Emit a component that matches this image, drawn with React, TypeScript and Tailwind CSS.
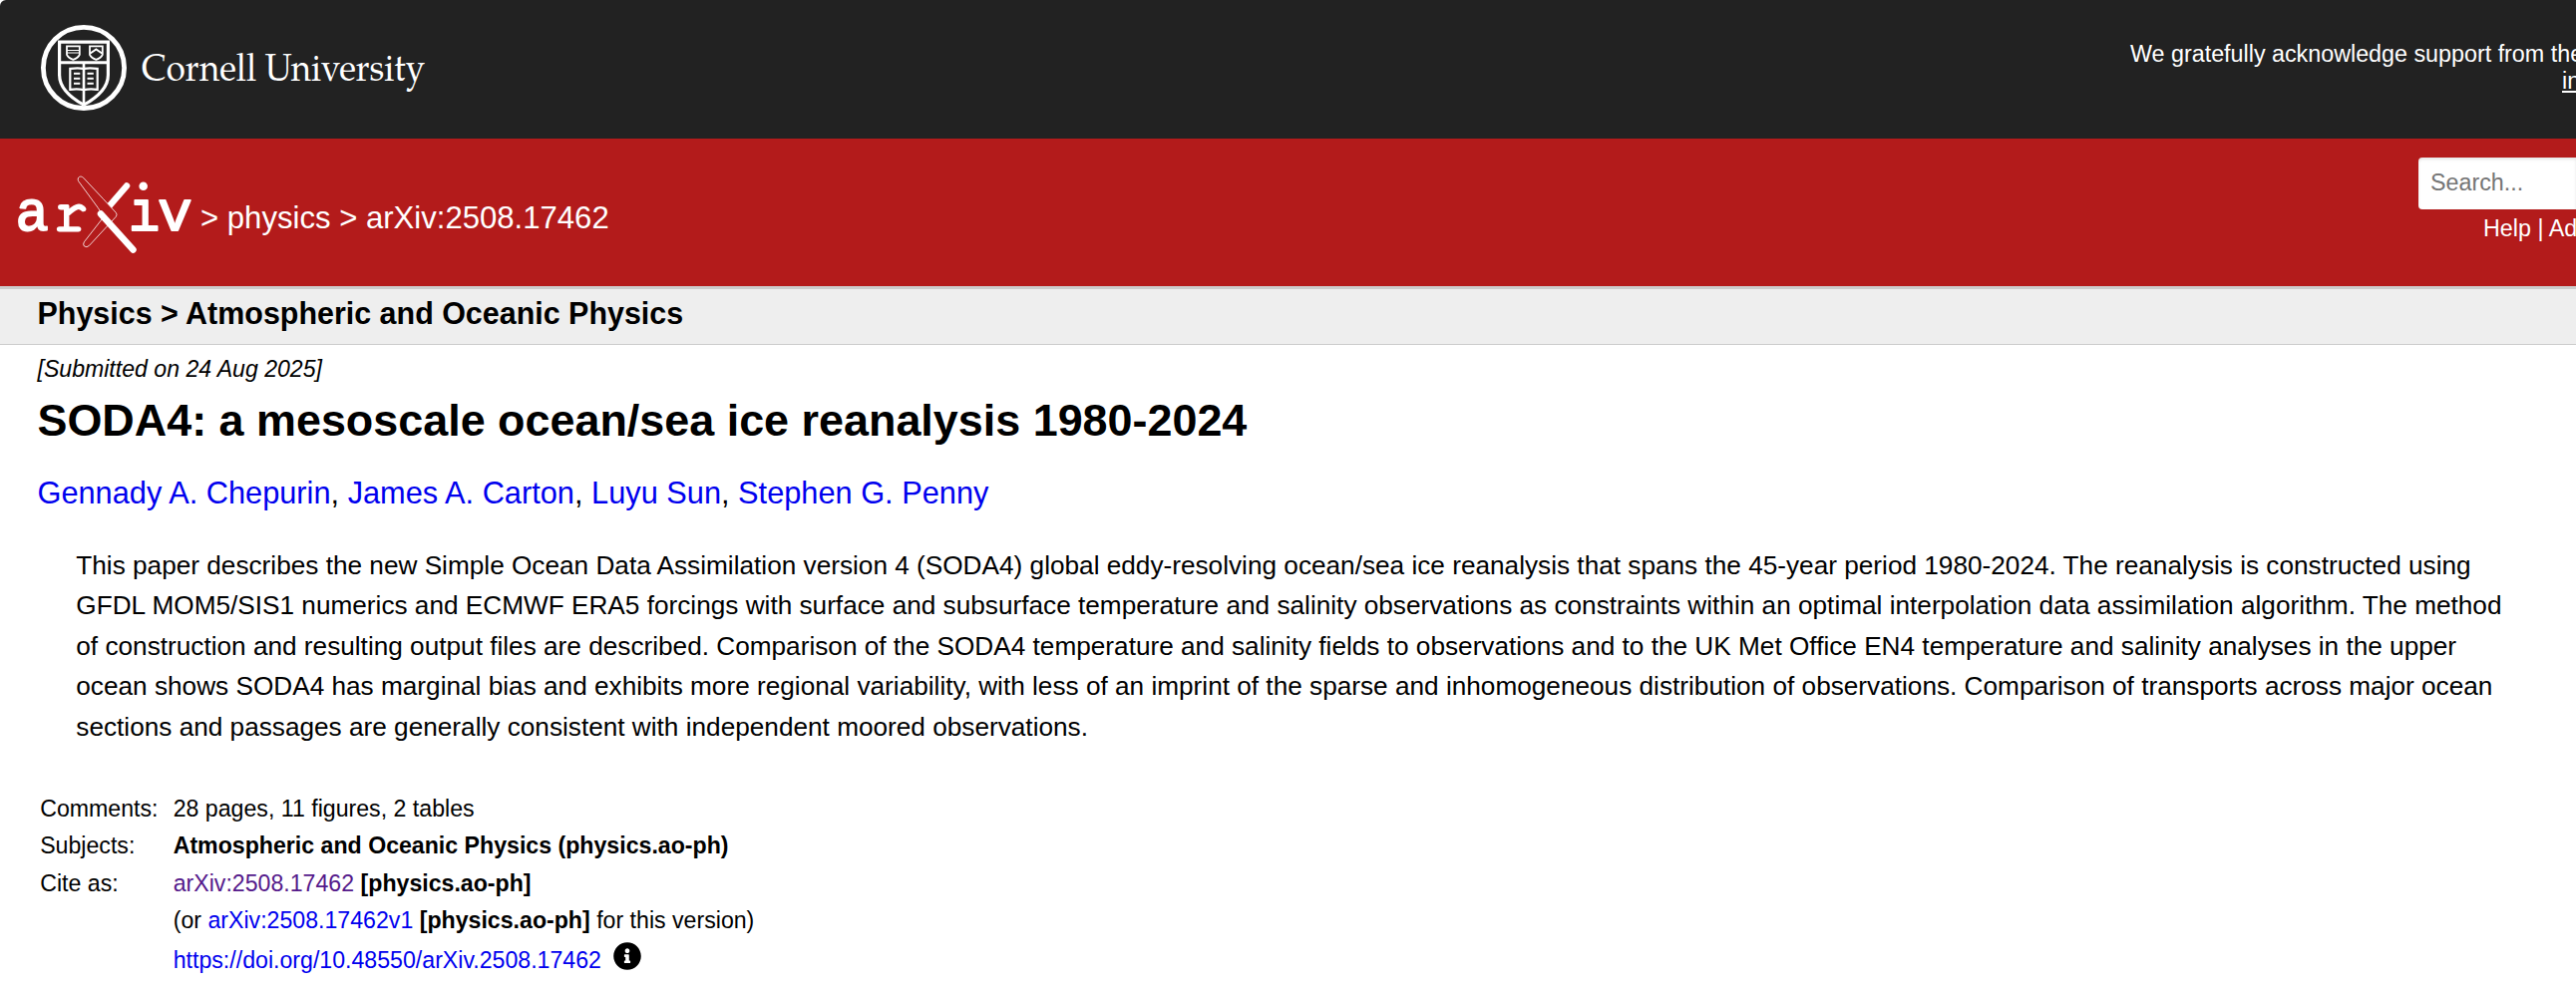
import type { ReactNode } from 'react';

function CornellLogo() {
  return (
    <svg width="400" height="90" viewBox="38 23 400 90" fill="none" stroke="#fff" aria-label="Cornell University" className="overflow-visible">
      <circle cx="84" cy="68" r="40.6" strokeWidth="4.8" />
      <path d="M59.6 42.2h48.8v33c0 13-10 22-24.4 30C69.6 97.2 59.6 88.2 59.6 75.2z" strokeWidth="3.2" />
      <path d="M60 62.8h48" strokeWidth="3" />
      <path d="M84 63v42" strokeWidth="2.6" />
      <path d="M70.3 68.8q8-.8 13.7 0q5.700-.8 13.700 0v21q-8-.8-13.700.3q-5.700-1.100-13.700-.3z" strokeWidth="2.2" />
      <path d="M74 73.7h6.3M74 78.7h6.3M74 83.7h6.3M87.5 73.7h6.3M87.5 78.7h6.3M87.5 83.7h6.3" strokeWidth="2" />
      <path d="M67 46.3h12.8v8.500q-1.500 3.200-6.400 5q-4.900-1.800-6.400-5z" strokeWidth="1.8" />
      <path d="M67 50.500h12.800M67 53h12.800" strokeWidth="1.2" />
      <path d="M90 46.3h12.8v8.500q-1.500 3.200-6.400 5q-4.900-1.800-6.400-5z" strokeWidth="1.8" />
      <path d="M90.5 53.5l5.9-4l5.9 4" strokeWidth="2" />
      <text
        x="142"
        y="81.3"
        textLength="284"
        lengthAdjust="spacingAndGlyphs"
        fill="#fff"
        stroke="none"
        className="font-['TeX_Gyre_Pagella','Liberation_Serif',serif] text-[39px]"
      >
        Cornell University
      </text>
    </svg>
  );
}

function ArxivLogo() {
  return (
    <svg width="184" height="84" viewBox="12 175 184 84" fill="none" aria-label="arXiv">
      <g
        fill="#fff"
        stroke="#fff"
        strokeWidth="1.8"
        strokeLinejoin="round"
        className="font-['Liberation_Mono',monospace] text-[58px]"
      >
        <text transform="translate(15.5 231) scale(.96 1)">a</text>
        <text x="53.5" y="231" strokeWidth="3" className="font-['TeX_Gyre_Cursor','Liberation_Mono',monospace]">r</text>
        <text transform="translate(129 231) scale(.9 1)">ı</text>
        <text x="158" y="231">v</text>
      </g>
      <circle cx="143.7" cy="186.8" r="4.3" fill="#fff" />
      <path d="M127 186.5L108 208.5" stroke="#fff" strokeWidth="6.5" strokeLinecap="round" />
      <path
        d="M78.5 181.5C77 177.5 81 175.8 83.5 178.2L103.3 199.3L116.3 213.3Q117.8 215.3 116.3 217.3L89.5 246.3Q87 248.8 84.5 247Q82.8 245.3 84.3 242.8L104 217.5L98.3 208.5z"
        fill="#b31b1b"
        stroke="#fff"
        strokeWidth="0.8"
      />
      <path d="M101 214.500L133.500 250.500" stroke="#fff" strokeWidth="6.5" strokeLinecap="round" />
    </svg>
  );
}

function Link({ children, visited }: { children: ReactNode; visited?: boolean }) {
  return (
    <a href="#" className={visited ? 'text-[#551a8b]' : 'text-[#0000ee]'}>
      {children}
    </a>
  );
}

const abstractLines = [
  'This paper describes the new Simple Ocean Data Assimilation version 4 (SODA4) global eddy-resolving ocean/sea ice reanalysis that spans the 45-year period 1980-2024. The reanalysis is constructed using',
  'GFDL MOM5/SIS1 numerics and ECMWF ERA5 forcings with surface and subsurface temperature and salinity observations as constraints within an optimal interpolation data assimilation algorithm. The method',
  'of construction and resulting output files are described. Comparison of the SODA4 temperature and salinity fields to observations and to the UK Met Office EN4 temperature and salinity analyses in the upper',
  'ocean shows SODA4 has marginal bias and exhibits more regional variability, with less of an imprint of the sparse and inhomogeneous distribution of observations. Comparison of transports across major ocean',
  'sections and passages are generally consistent with independent moored observations.',
];

const authors = ['Gennady A. Chepurin', 'James A. Carton', 'Luyu Sun', 'Stephen G. Penny'];

export default function App() {
  return (
    <div className="h-[994px] w-full overflow-hidden bg-white font-['Liberation_Sans',Arial,sans-serif] text-black">
      <header className="flex h-[139px] justify-between overflow-hidden rounded-tl-[6px] bg-[#222] text-white">
        <div className="pt-[23px] pl-[38px]">
          <CornellLogo />
        </div>
        <div className="w-[447px] pt-[41px] text-[23.3px] leading-[27px] whitespace-nowrap">
          <div>We gratefully acknowledge support from the</div>
          <div className="pl-[433px]">
            <a href="#" className="underline">in</a>
          </div>
        </div>
      </header>

      <div className="flex h-[151px] justify-between overflow-hidden border-b-[3px] border-[#ccc] bg-[#b31b1b] text-white">
        <div className="flex pl-[12px]">
          <a href="#" className="pt-[36px]">
            <ArxivLogo />
          </a>
          <div className="pt-[62px] pl-[5px] text-[31.1px] leading-[36px] whitespace-nowrap">
            &gt; <a href="#">physics</a> &gt; arXiv:2508.17462
          </div>
        </div>
        <div className="w-[158px] pt-[19px] text-[23.3px] leading-[27px] whitespace-nowrap">
          <div className="flex h-[52px] items-center rounded-l-[4px] bg-white pb-[2px] pl-[12px] text-[#757575] shadow-[inset_0_2px_3px_rgba(10,10,10,0.1)]">
            Search...
          </div>
          <div className="pt-[6px] pl-[65px]">
            <a href="#">Help</a> | <a href="#">Ad</a>
          </div>
        </div>
      </div>

      <div className="h-[56px] border-b border-[#ccc] bg-[#eee] pt-[6px] pl-[37.5px] text-[30.45px] leading-[36px] font-bold">
        Physics &gt; Atmospheric and Oceanic Physics
      </div>

      <main className="pt-[11px] pl-[37.5px] whitespace-nowrap">
        <div className="text-[23.1px] leading-[27px] italic">[Submitted on 24 Aug 2025]</div>
        <h1 className="pt-[13px] text-[44.9px] leading-[50px] font-bold">
          SODA4: a mesoscale ocean/sea ice reanalysis 1980-2024
        </h1>
        <div className="pt-[30px] text-[30.75px] leading-[36px]">
          {authors.map((author, i) => (
            <span key={author}>
              {i > 0 && ', '}
              <Link>{author}</Link>
            </span>
          ))}
        </div>
        <blockquote className="pt-[33.7px] pl-[38.8px] text-[26.19px] leading-[40.5px]">
          {abstractLines.map((line) => (
            <span key={line} className="block">
              {line}
            </span>
          ))}
        </blockquote>

        <div className="grid grid-cols-[133.5px_1fr] pt-[43.7px] pl-[2.7px] text-[23.15px] leading-[37.4px]">
          <div>Comments:</div>
          <div>28 pages, 11 figures, 2 tables</div>
          <div>Subjects:</div>
          <div className="font-bold">Atmospheric and Oceanic Physics (physics.ao-ph)</div>
          <div>Cite as:</div>
          <div>
            <Link visited>arXiv:2508.17462</Link> <b>[physics.ao-ph]</b>
          </div>
          <div className="col-start-2">
            (or <Link>arXiv:2508.17462v1</Link> <b>[physics.ao-ph]</b> for this version)
          </div>
          <div className="col-start-2 flex pt-[2px]">
            <Link>https://doi.org/10.48550/arXiv.2508.17462</Link>
            <svg width="28" height="28" viewBox="4 4 504 504" className="ml-[12.5px]">
              <path
                fill="#000"
                d="M256 8C119 8 8 119 8 256s111 248 248 248 248-111 248-248S393 8 256 8zm0 110c23.2 0 42 18.8 42 42s-18.8 42-42 42-42-18.8-42-42 18.8-42 42-42zm56 254c0 6.6-5.4 12-12 12h-88c-6.6 0-12-5.4-12-12v-24c0-6.6 5.4-12 12-12h12v-64h-12c-6.6 0-12-5.4-12-12v-24c0-6.6 5.4-12 12-12h64c6.6 0 12 5.4 12 12v100h12c6.6 0 12 5.4 12 12v24z"
              />
            </svg>
          </div>
        </div>
      </main>
    </div>
  );
}
